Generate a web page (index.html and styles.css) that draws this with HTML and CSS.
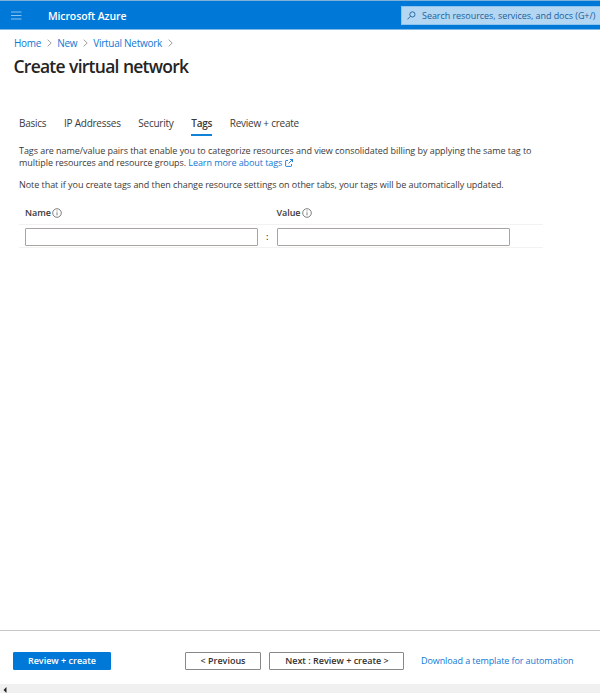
FILE: index.html
```html
<!DOCTYPE html>
<html lang="en">
<head>
<meta charset="utf-8">
<title>Create virtual network - Microsoft Azure</title>
<link rel="stylesheet" href="styles.css">
</head>
<body>
<header class="topbar">
  <svg class="menu-icon" viewBox="0 0 11 9"><path d="M0 1h10.5M0 4.5h10.5M0 8h10.5"/></svg>
  <span class="brand">Microsoft Azure</span>
  <div class="search">
    <svg class="search-icon" viewBox="0 0 10 10"><circle cx="6" cy="3.8" r="2.9"/><path d="M3.9 5.9L.5 9.3"/></svg>
    <span class="search-text">Search resources, services, and docs (G+/)</span>
  </div>
</header>
<nav class="crumbs">
  <a>Home</a><svg class="chev" viewBox="0 0 5 8"><path d="M.7.7L4.2 4 .7 7.3"/></svg>
  <a>New</a><svg class="chev" viewBox="0 0 5 8"><path d="M.7.7L4.2 4 .7 7.3"/></svg>
  <a>Virtual Network</a><svg class="chev" viewBox="0 0 5 8"><path d="M.7.7L4.2 4 .7 7.3"/></svg>
</nav>
<h1 class="title">Create virtual network</h1>
<main class="content">
  <div class="tabs">
    <span class="tab">Basics</span>
    <span class="tab">IP Addresses</span>
    <span class="tab">Security</span>
    <span class="tab active">Tags</span>
    <span class="tab">Review + create</span>
  </div>
  <p class="intro">Tags are name/value pairs that enable you to categorize resources and view consolidated billing by applying the same tag to<br><span class="second-line">multiple resources and resource groups. <a>Learn more about tags</a></span><svg class="ext" viewBox="0 0 8 8"><path d="M3 1.5H1.2Q.6 1.5.6 2.1v4.7q0 .6.6.6h4.7q.6 0 .6-.6V5M4.9.5h2.6v2.6M7.5.5L3.6 4.4"/></svg></p>
  <p class="note">Note that if you create tags and then change resource settings on other tabs, your tags will be automatically updated.</p>
  <div class="tag-table">
    <div class="tag-row tag-head">
      <div class="cell">Name<svg class="info" viewBox="0 0 10 10"><circle cx="5" cy="5" r="4.3"/><path d="M5 4.3v3M5 2.4v1"/></svg></div>
      <span class="colon"></span>
      <div class="cell">Value<svg class="info" viewBox="0 0 10 10"><circle cx="5" cy="5" r="4.3"/><path d="M5 4.3v3M5 2.4v1"/></svg></div>
    </div>
    <div class="tag-row tag-inputs">
      <input class="field" type="text">
      <span class="colon">:</span>
      <input class="field" type="text">
    </div>
  </div>
</main>
<footer class="footer">
  <button class="btn primary">Review + create</button>
  <button class="btn previous">&lt; Previous</button>
  <button class="btn next">Next : Review + create &gt;</button>
  <a class="download">Download a template for automation</a>
</footer>
<div class="scrollbar"><svg class="arrow" viewBox="0 0 4 6"><path d="M3.5 0v6L.5 3z"/></svg></div>
</body>
</html>
```

FILE: styles.css
```css
* { box-sizing: border-box; }
body {
  margin: 0;
  width: 600px;
  height: 693px;
  overflow: hidden;
  display: flex;
  flex-direction: column;
  background: #fff;
  color: #3b3a39;
  font: 9px/12px "Open Sans", "Noto Sans", sans-serif;
  letter-spacing: -.05px;
}
svg { fill: none; stroke: currentColor; flex: none; }
a { color: #0f78d4; white-space: nowrap; }
.topbar {
  height: 30px;
  flex: none;
  display: flex;
  align-items: center;
  padding: 1px 0 0 11px;
  background: #0078d7;
  border-top: 1px solid #7fb1d8;
  border-bottom: 1px solid #7fbbea;
  color: #fff;
}
.menu-icon { width: 11px; height: 9px; color: #8cc2ee; }
.brand { margin-left: 26px; width: 353px; font-size: 10.5px; font-weight: 600; letter-spacing: -.12px; white-space: nowrap; }
.search {
  width: 199px;
  height: 19px;
  flex: none;
  display: flex;
  align-items: center;
  padding-left: 5px;
  background: #b3d6f3;
  color: #1f5f98;
  border: 1px solid #8ec3ee;
  border-right: 0;
}
.search-icon { width: 9px; height: 9px; }
.search-text { margin-left: 6px; letter-spacing: -.05px; white-space: nowrap; }
.crumbs { display: flex; align-items: center; height: 14px; flex: none; margin: 6px 0 0 14px; font-size: 10px; letter-spacing: -.27px; }
.chev { width: 5px; height: 8px; margin: 0 5px 0 6px; color: #8a8886; stroke-width: .8; }
.title { margin: 4px 0 0 13.5px; height: 24px; flex: none; font-size: 17.5px; line-height: 24px; font-weight: 600; color: #252423; letter-spacing: -.76px; word-spacing: .5px; }
.content { flex: 1; padding: 39px 57px 0 19px; }
.tabs { display: flex; height: 19px; font-size: 10px; white-space: nowrap; letter-spacing: -.25px; }
.tab { margin-right: 17.7px; }
.active { font-weight: 600; border-bottom: 2px solid #0f83d9; }
.intro { margin: 9px 0 0; white-space: nowrap; }
.second-line { letter-spacing: -.07px; }
.ext { width: 8px; height: 8px; margin-left: 3px; color: #0f78d4; vertical-align: -1px; stroke-width: .9; }
.note { margin: 10px 0 0; white-space: nowrap; }
.tag-table { margin-top: 10px; }
.tag-row { display: flex; align-items: center; padding-left: 6px; border-bottom: 1px solid #f3f2f1; }
.tag-head { height: 24px; font-weight: 600; }
.tag-inputs { height: 23px; padding-top: 1px; }
.cell { width: 233px; display: flex; align-items: center; }
.info { width: 10px; height: 10px; margin-left: 1.5px; color: #605e5c; stroke-width: .8; }
.colon { width: 18.5px; text-align: center; font-weight: 600; }
.field { width: 233px; height: 18px; margin: 0; padding: 0 4px; border: 1px solid #a6a5a4; border-radius: 1px; background: #fff; }
.footer { height: 54px; flex: none; display: flex; align-items: flex-start; padding: 21px 0 0 13px; border-top: 1px solid #c8c8c8; }
.btn { height: 18px; margin: 0; padding: 0; border: 1px solid #8a8886; border-radius: 1px; background: #fff; color: #323130; font: 600 9px/14px "Open Sans", "Noto Sans", sans-serif; letter-spacing: 0; white-space: nowrap; }
.primary { width: 98px; background: #0078d7; border-color: #0078d7; color: #fff; }
.previous { width: 76px; margin-left: 74px; }
.next { width: 135px; margin-left: 8.4px; }
.download { margin: 3px 0 0 16.6px; letter-spacing: -.09px; }
.scrollbar { height: 9px; flex: none; background: #f0f0f0; display: flex; align-items: center; padding: 2px 0 0 3px; }
.arrow { width: 4px; height: 6px; fill: #222; stroke: none; }
```
